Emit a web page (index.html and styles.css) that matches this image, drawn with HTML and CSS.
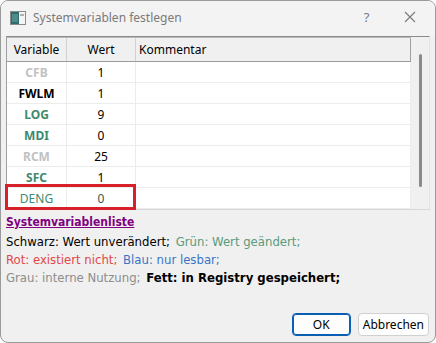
FILE: index.html
```html
<!DOCTYPE html>
<html lang="de">
<head>
  <meta charset="UTF-8" />
  <title>Systemvariablen festlegen</title>
  <link rel="stylesheet" href="styles.css">
</head>
<body>

  <div class="window">
    <!-- Titelleiste -->
    <div class="titlebar">
      <svg class="app-icon" width="16" height="14" viewBox="0 0 16 14">
        <rect x="0.5" y="0.5" width="15" height="13" fill="#f4f4f4" stroke="#8a8a8a"/>
        <rect x="1" y="1" width="8" height="12" fill="#2f6b6a"/>
        <rect x="2" y="3" width="6" height="8" fill="#4d8c8a"/>
        <rect x="10" y="3" width="4" height="2" fill="#b0b0b0"/>
      </svg>
      <span class="title">Systemvariablen festlegen</span>
      <span class="tb-btn help">?</span>
      <span class="tb-btn close">
        <svg width="12" height="12" viewBox="0 0 12 12">
          <path d="M1 1 L11 11 M11 1 L1 11" stroke="#7a7a7a" stroke-width="1.1" fill="none"/>
        </svg>
      </span>
    </div>

    <!-- Tabelle -->
    <div class="table-frame">
      <div class="grid">
        <div class="row head">
          <div class="cell c-var">Variable</div>
          <div class="cell c-val">Wert</div>
          <div class="cell c-com">Kommentar</div>
        </div>
        <div class="row">
          <div class="cell c-var grey b">CFB</div>
          <div class="cell c-val">1</div>
          <div class="cell c-com"></div>
        </div>
        <div class="row">
          <div class="cell c-var b">FWLM</div>
          <div class="cell c-val">1</div>
          <div class="cell c-com"></div>
        </div>
        <div class="row">
          <div class="cell c-var green b">LOG</div>
          <div class="cell c-val">9</div>
          <div class="cell c-com"></div>
        </div>
        <div class="row">
          <div class="cell c-var green b">MDI</div>
          <div class="cell c-val">0</div>
          <div class="cell c-com"></div>
        </div>
        <div class="row">
          <div class="cell c-var grey b">RCM</div>
          <div class="cell c-val">25</div>
          <div class="cell c-com"></div>
        </div>
        <div class="row">
          <div class="cell c-var green b">SFC</div>
          <div class="cell c-val">1</div>
          <div class="cell c-com"></div>
        </div>
        <div class="row">
          <div class="cell c-var green">DENG</div>
          <div class="cell c-val green-dark">0</div>
          <div class="cell c-com"></div>
        </div>
        <div class="mark"></div>
      </div>
      <div class="scrollbar"><div class="thumb"></div></div>
    </div>

    <!-- Legende -->
    <div class="legend">
      <a class="list-link" href="#">Systemvariablenliste</a>
      <div class="line">
        <span class="l-black">Schwarz: Wert unverändert;</span>
        <span class="l-green">Grün: Wert geändert;</span>
      </div>
      <div class="line">
        <span class="l-red">Rot: existiert nicht;</span>
        <span class="l-blue">Blau: nur lesbar;</span>
      </div>
      <div class="line">
        <span class="l-grey">Grau: interne Nutzung;</span>
        <span class="l-bold">Fett: in Registry gespeichert;</span>
      </div>
    </div>

    <div class="buttons">
      <button class="btn default">OK</button>
      <button class="btn">Abbrechen</button>
    </div>
  </div>

</body>
</html>
```

FILE: styles.css
```css
/* Windows-Dialog */
body {
  margin: 0;
  padding: 0;
  background: #ffffff;
  font-family: 'Noto Sans', sans-serif;
  font-size: 12px;
}

.window {
  box-sizing: border-box;
  width: 436px;
  height: 343px;
  border: 1px solid #9a9a9a;
  border-radius: 8px;
  background: #f0f0f0;
  display: flex;
  flex-direction: column;
  overflow: hidden;
}

.titlebar {
  height: 35px;
  flex: none;
  display: flex;
  align-items: center;
  background: #f3f3f3;
  padding-left: 9px;
}

.app-icon {
  margin-right: 7px;
  margin-top: -2px;
}

.title {
  color: #7a7a7a;
  flex: 1;
  margin-top: -3px;
}

.tb-btn {
  width: 45px;
  text-align: center;
  color: #7a7a7a;
  margin-top: -3px;
}

.help {
  font-size: 13px;
  margin-right: -2px;
}

.close {
  display: flex;
  justify-content: center;
  width: 46px;
  margin-right: 2px;
}

.table-frame {
  position: relative;
  display: flex;
  margin: 0 5px 0 5px;
  height: 172px;
  border-top: 1px solid #8c8c8c;
  border-left: 1px solid #a0a0a0;
  border-right: 1px solid #e4e4e4;
  border-bottom: 1px solid #d8d8d8;
  background: #ffffff;
}

.grid {
  position: relative;
  flex: 1;
  display: flex;
  flex-direction: column;
}

.row {
  display: flex;
  height: 20px;
  border-bottom: 1px solid #ececec;
}

.row.head {
  height: 23px;
  background: #f0f0f0;
  border-top: 1px solid #b8b8b8;
  border-bottom: 1px solid #9c9c9c;
}

.cell {
  box-sizing: border-box;
  display: flex;
  align-items: center;
  justify-content: center;
  border-right: 1px solid #ececec;
  color: #000000;
}

.head .cell {
  border-right-color: #d0d0d0;
}

.head .c-com {
  border-right-color: #a0a0a0;
}

.c-var {
  width: 60px;
}

.c-val {
  width: 69px;
}

.c-com {
  flex: 1;
  justify-content: flex-start;
  padding-left: 3px;
}

.b {
  font-weight: bold;
}

.grey {
  color: #c2c2c2;
}

.green {
  color: #3e8a6c;
}

.green-dark {
  color: #2f5a4a;
}

.mark {
  position: absolute;
  left: -2px;
  top: 147px;
  width: 125px;
  height: 20px;
  border: 3px solid #d6212b;
}

.scrollbar {
  width: 18px;
  background: #f0f0f0;
  position: relative;
}

.thumb {
  position: absolute;
  left: 8px;
  top: 17px;
  width: 3px;
  height: 133px;
  border-radius: 2px;
  background: #8a8a8a;
}

.legend {
  padding: 2px 0 0 5px;
  font-family: 'DejaVu Sans Condensed', 'DejaVu Sans', sans-serif;
  font-size: 13px;
  line-height: 18px;
}

.list-link {
  display: block;
  color: #800080;
  font-weight: bold;
  font-size: 12px;
  text-decoration: underline;
  line-height: 20px;
  margin-bottom: 1px;
}

.line span {
  margin-right: 2px;
}

.l-black { color: #000000; }
.l-green { color: #5a9a7c; }
.l-red { color: #e04848; }
.l-blue { color: #3a74c8; }
.l-grey { color: #8c8c8c; }
.l-bold { color: #000000; font-weight: bold; }

.buttons {
  margin-top: auto;
  display: flex;
  justify-content: flex-end;
  gap: 7px;
  padding: 0 6px 6px 0;
}

.btn {
  height: 23px;
  min-width: 59px;
  padding: 0 4px;
  font-family: 'Noto Sans', sans-serif;
  font-size: 12px;
  color: #000000;
  background: #fdfdfd;
  border: 1px solid #d0d0d0;
  border-radius: 4px;
}

.btn.default {
  border: 1px solid #0a5fb4;
  box-shadow: inset 0 0 0 1px #0a5fb4;
}
```
